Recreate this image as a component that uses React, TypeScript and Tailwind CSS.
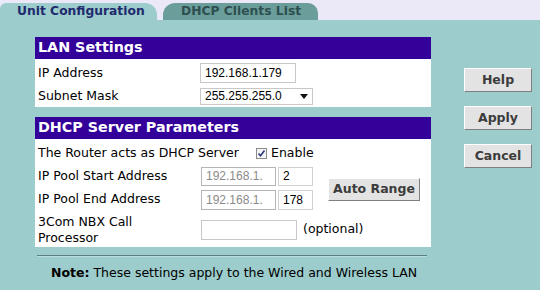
import React from 'react';

const label = "font-['DejaVu_Sans',Verdana,sans-serif] text-[12.5px] text-black";
const field = "font-['Liberation_Sans',Arial,sans-serif] text-[12px]";

const SideButton: React.FC<{ text: string }> = ({ text }) => (
  <button className="w-[68px] h-[24px] bg-[#e3e3e3] border border-t-white border-l-white border-b-[#7f7f7f] border-r-[#7f7f7f] font-['DejaVu_Sans',Verdana,sans-serif] text-[12.5px] font-bold text-[#3c3c3c]">
    {text}
  </button>
);

const Header: React.FC<{ title: string }> = ({ title }) => (
  <div className="h-[22px] bg-[#330099] flex items-center px-[3px] font-['DejaVu_Sans',Verdana,sans-serif] text-[14.3px] font-bold text-white">
    {title}
  </div>
);

export default function App() {
  return (
    <div className="w-[540px] h-[290px] bg-[#ebe9f7] flex flex-col overflow-hidden">
      {/* Tabs */}
      <div className="h-[20px] pt-[3px] flex items-end">
        <div className="w-[157px] h-[17px] bg-[#9ccccb] rounded-tl-[6px] rounded-tr-[12px] pl-[17px] flex items-center font-['DejaVu_Sans',Verdana,sans-serif] text-[12.3px] font-bold text-[#1f2a6e]">
          Unit Configuration
        </div>
        <div className="ml-[6px] w-[155px] h-[17px] bg-[#6b9e9b] rounded-tl-[12px] rounded-tr-[10px] pl-[18px] flex items-center font-['DejaVu_Sans',Verdana,sans-serif] text-[12.3px] font-bold text-[#2e4f4f]">
          DHCP Clients List
        </div>
      </div>

      {/* Body */}
      <div className="flex-1 bg-[#9ccccb] flex pt-[17px] pl-[35px]">
        <div className="w-[396px] flex flex-col">
          {/* LAN Settings */}
          <Header title="LAN Settings" />
          <div className="bg-white pt-[2px] pl-[3px]">
            <div className="h-[24px] flex items-center">
              <span className={`${label} w-[162px]`}>IP Address</span>
              <div className={`${field} w-[96px] h-[20px] border border-[#c8c8c8] flex items-center pl-[4px] text-black`}>
                192.168.1.179
              </div>
            </div>
            <div className="h-[22px] flex items-center">
              <span className={`${label} w-[162px]`}>Subnet Mask</span>
              <div className={`${field} w-[113px] h-[17px] border border-[#c8c8c8] flex items-center justify-between pl-[4px] pr-[4px] text-black`}>
                <span>255.255.255.0</span>
                <svg width="8" height="5" viewBox="0 0 8 5"><path d="M0 0h8L4 5z" fill="#111" /></svg>
              </div>
            </div>
          </div>

          {/* DHCP */}
          <div className="mt-[10px]">
            <Header title="DHCP Server Parameters" />
          </div>
          <div className="bg-white pt-[2px] pl-[3px]">
            <div className="h-[24px] flex items-center">
              <span className={`${label} w-[218px]`}>The Router acts as DHCP Server</span>
              <span className="w-[11px] h-[11px] border border-[#8a8a8a] bg-[#f4f4f4] flex items-center justify-center mr-[4px]">
                <svg width="9" height="9" viewBox="0 0 9 9"><path d="M1.5 4.5l2 2.2L7.5 1.5" stroke="#2a3a7a" strokeWidth="1.6" fill="none" /></svg>
              </span>
              <span className={label}>Enable</span>
            </div>
            <div className="flex items-center">
              <div className="flex flex-col">
                <div className="h-[22px] flex items-center">
                  <span className={`${label} w-[163px]`}>IP Pool Start Address</span>
                  <div className={`${field} w-[75px] h-[19px] border border-[#b4b4b4] flex items-center pl-[4px] text-[#8a8a8a]`}>192.168.1.</div>
                  <div className={`${field} ml-[2px] w-[35px] h-[19px] border border-[#d0d0d0] flex items-center pl-[4px] text-black`}>2</div>
                </div>
                <div className="h-[25px] flex items-center">
                  <span className={`${label} w-[163px]`}>IP Pool End Address</span>
                  <div className={`${field} w-[75px] h-[20px] border border-[#b4b4b4] flex items-center pl-[4px] text-[#8a8a8a]`}>192.168.1.</div>
                  <div className={`${field} ml-[2px] w-[35px] h-[20px] border border-[#d0d0d0] flex items-center pl-[4px] text-black`}>178</div>
                </div>
              </div>
              <button className="ml-[15px] mt-[2px] w-[92px] h-[23px] bg-[#e3e3e3] border border-t-white border-l-white border-b-[#7f7f7f] border-r-[#7f7f7f] font-['DejaVu_Sans',Verdana,sans-serif] text-[12.5px] font-bold text-[#3c3c3c]">
                Auto Range
              </button>
            </div>
            <div className="h-[35px] flex items-center">
              <span className={`${label} w-[163px] leading-[16px]`}>3Com NBX Call<br />Processor</span>
              <div className="w-[96px] h-[20px] border border-[#c8c8c8]" />
              <span className={`${label} ml-[6px]`}>(optional)</span>
            </div>
          </div>

          {/* Note */}
          <div className="mt-[8px] ml-[2px] w-[390px] border-t border-t-[#5f7f7f] border-b border-b-[#b8dede]" />
          <div className={`${label} mt-[7px] pl-[16px] text-[#1a1a1a]`}>
            <span className="font-bold">Note:</span> These settings apply to the Wired and Wireless LAN
          </div>
        </div>

        <div className="ml-[33px] pt-[31px] flex flex-col gap-[14px]">
          <SideButton text="Help" />
          <SideButton text="Apply" />
          <SideButton text="Cancel" />
        </div>
      </div>
    </div>
  );
}
